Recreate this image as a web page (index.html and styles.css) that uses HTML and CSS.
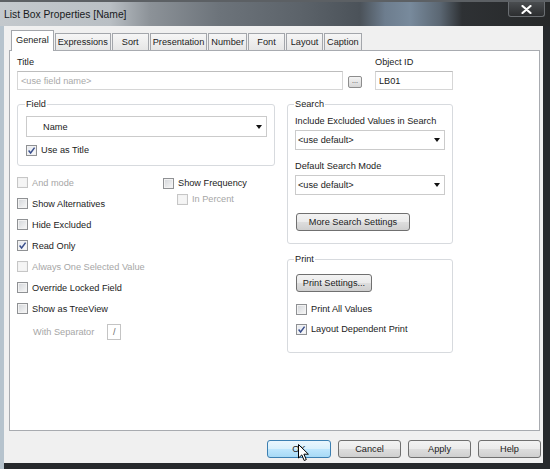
FILE: index.html
```html
<!DOCTYPE html>
<html>
<head>
<meta charset="utf-8">
<title>List Box Properties [Name]</title>
<link rel="stylesheet" href="styles.css">
</head>
<body>
<div class="window">
  <div class="titlebar">
    <span class="title">List Box Properties [Name]</span>
    <span class="close"><svg width="11" height="9" viewBox="0 0 11 9"><path d="M1.5 1 L9.5 8 M9.5 1 L1.5 8" stroke="#fff" stroke-width="2.2" stroke-linecap="round"/></svg></span>
  </div>
  <div class="dialog">
    <div class="tabs">
      <span class="tab active">General</span>
      <span class="tab">Expressions</span>
      <span class="tab">Sort</span>
      <span class="tab">Presentation</span>
      <span class="tab">Number</span>
      <span class="tab">Font</span>
      <span class="tab">Layout</span>
      <span class="tab">Caption</span>
    </div>
    <div class="panel">
      <div class="top-row">
        <div class="title-field">
          <div class="lbl">Title</div>
          <div class="title-input-row">
            <div class="input wide placeholder">&lt;use field name&gt;</div>
            <span class="dots">...</span>
          </div>
        </div>
        <div class="objid">
          <div class="lbl">Object ID</div>
          <div class="input id">LB01</div>
        </div>
      </div>
      <div class="columns">
        <div class="left-col">
          <fieldset class="group field-group">
            <legend>Field</legend>
            <div class="select name-select"><span>Name</span><i class="arrow"></i></div>
            <div class="check use-title"><span class="box on"><svg width="9" height="9" viewBox="0 0 9 9"><path d="M1.6 4.6 L3.6 7 L7.6 1.6" fill="none" stroke="#3a4f8c" stroke-width="1.5"/></svg></span>Use as Title</div>
          </fieldset>
          <div class="options">
            <div class="opt-col">
              <div class="check disabled"><span class="box"></span>And mode</div>
              <div class="check"><span class="box"></span>Show Alternatives</div>
              <div class="check"><span class="box"></span>Hide Excluded</div>
              <div class="check"><span class="box on"><svg width="9" height="9" viewBox="0 0 9 9"><path d="M1.6 4.6 L3.6 7 L7.6 1.6" fill="none" stroke="#3a4f8c" stroke-width="1.5"/></svg></span>Read Only</div>
              <div class="check disabled"><span class="box"></span>Always One Selected Value</div>
              <div class="check"><span class="box"></span>Override Locked Field</div>
              <div class="check"><span class="box"></span>Show as TreeView</div>
              <div class="sep-row"><span>With Separator</span><span class="sep-input">/</span></div>
            </div>
            <div class="opt-col2">
              <div class="check"><span class="box"></span>Show Frequency</div>
              <div class="check disabled indent"><span class="box"></span>In Percent</div>
            </div>
          </div>
        </div>
        <div class="right-col">
          <fieldset class="group search-group">
            <legend>Search</legend>
            <div class="lbl">Include Excluded Values in Search</div>
            <div class="select"><span>&lt;use default&gt;</span><i class="arrow"></i></div>
            <div class="lbl gap">Default Search Mode</div>
            <div class="select"><span>&lt;use default&gt;</span><i class="arrow"></i></div>
            <span class="btn more">More Search Settings</span>
          </fieldset>
          <fieldset class="group print-group">
            <legend>Print</legend>
            <span class="btn print-btn">Print Settings...</span>
            <div class="check print-first"><span class="box"></span>Print All Values</div>
            <div class="check"><span class="box on"><svg width="9" height="9" viewBox="0 0 9 9"><path d="M1.6 4.6 L3.6 7 L7.6 1.6" fill="none" stroke="#3a4f8c" stroke-width="1.5"/></svg></span>Layout Dependent Print</div>
          </fieldset>
        </div>
      </div>
    </div>
    <div class="buttons">
      <span class="btn dlg ok">OK<svg class="cursor" width="12" height="18" viewBox="0 0 12 18"><path d="M0.5 0.5 L0.5 14 L3.8 10.9 L6.2 16.5 L8.3 15.6 L5.9 10.2 L10.4 10.2 Z" fill="#fff" stroke="#000" stroke-width="1" stroke-linejoin="round"/></svg></span>
      <span class="btn dlg">Cancel</span>
      <span class="btn dlg">Apply</span>
      <span class="btn dlg">Help</span>
    </div>
  </div>
</div>
</body>
</html>
```

FILE: styles.css
```css
* { box-sizing: border-box; }
html, body { margin: 0; padding: 0; }
body {
  width: 550px;
  height: 469px;
  overflow: hidden;
  background: #1c1e20;
  font-family: "Liberation Sans", Arial, sans-serif;
  font-size: 9.2px;
  color: #1b1b1b;
}
.window {
  width: 550px;
  height: 469px;
  display: flex;
  flex-direction: column;
  background: linear-gradient(to right, #b6c3cd 0, #b6c3cd 4px, #26292c 4px, #26292c 100%);
}
.titlebar {
  height: 26px;
  flex: none;
  display: flex;
  align-items: flex-start;
  justify-content: space-between;
  padding: 0 5px 0 4px;
  border-top: 2px solid #5c6064;
  background: linear-gradient(to right, #c4c9cd 0, #b9bfc4 110px, #8c9298 150px, #6c737a 220px, #5c636a 300px, #4b5259 360px, #6d7d8e 385px, #788a9c 410px, #5b6773 440px, #2e3134 462px, #262829 550px);
}
.title {
  font-size: 10.3px;
  line-height: 12px;
  margin-top: 7px;
  color: #181a1c;
}
.close {
  width: 37px;
  height: 15px;
  display: flex;
  align-items: center;
  justify-content: center;
  background: linear-gradient(#4a4d50, #2c2e30);
  border: 1px solid #6a6e72;
  border-top: none;
  border-radius: 0 0 3px 3px;
}
.dialog {
  flex: 1;
  margin: 0 7px 6px 4px;
  background: #f0f0f0;
  display: flex;
  flex-direction: column;
  padding: 4px 3px 5px 5px;
}
.tabs {
  height: 20px;
  display: flex;
  align-items: flex-end;
  padding-left: 2px;
  gap: 1px;
}
.tab {
  height: 17px;
  min-width: 37px;
  padding: 0 2px;
  border: 1px solid #a3a6ab;
  border-bottom: none;
  background: linear-gradient(#f6f6f6, #e6e6e6);
  display: flex;
  align-items: center;
  justify-content: center;
  color: #222;
}
.tab.active {
  height: 21px;
  margin-bottom: -1px;
  padding: 0 4px 2px;
  background: #fff;
  position: relative;
  z-index: 1;
}
.panel {
  flex: 1;
  background: #fff;
  border: 1px solid #a8abb0;
  padding: 6px 7px 0 7px;
}
.lbl { line-height: 11px; }
.top-row { display: flex; gap: 13px; }
.title-field { width: 345px; }
.title-input-row {
  display: flex;
  align-items: flex-end;
  gap: 5px;
  margin-top: 3px;
}
.input {
  height: 19px;
  border: 1px solid #d6d6d6;
  border-top-color: #bdbdbd;
  background: #fff;
  display: flex;
  align-items: center;
  padding-left: 3px;
}
.input.wide { width: 326px; }
.placeholder { color: #a9a9a9; }
.dots {
  width: 14px;
  height: 12px;
  margin-bottom: 2px;
  border: 1px solid #8d8d8d;
  border-radius: 2px;
  background: linear-gradient(#f4f4f4, #d6d6d6);
  font-size: 7px;
  line-height: 8px;
  text-align: center;
  color: #333;
}
.objid { width: 78px; }
.objid .input { margin-top: 3px; }
.columns {
  display: flex;
  gap: 12px;
  margin-top: 9px;
}
.left-col { width: 258px; }
.right-col { width: 166px; }
fieldset.group {
  margin: 0;
  min-width: 0;
  border: 1px solid #d7dade;
  border-radius: 3px;
}
fieldset.group legend {
  padding: 0 1px;
  margin-left: -1px;
  line-height: 11px;
}
.field-group { padding: 6px 7px 5px 8px; }
.select {
  height: 20px;
  margin-top: 3px;
  border: 1px solid #cbcbcb;
  background: #fff;
  display: flex;
  align-items: center;
  justify-content: space-between;
  padding: 0 4px 0 2px;
}
.arrow {
  width: 0;
  height: 0;
  border-left: 3.5px solid transparent;
  border-right: 3.5px solid transparent;
  border-top: 4px solid #111;
}
.name-select {
  height: 21px;
  margin-top: 0;
  padding-left: 16px;
}
.check {
  display: flex;
  align-items: center;
  gap: 4px;
  height: 21px;
}
.box {
  width: 11px;
  height: 11px;
  flex: none;
  border: 1px solid #8f9194;
  background: linear-gradient(135deg, #d2d5d9, #f8f8f8);
  box-shadow: inset 0 0 0 1px #f2f2f2;
  display: flex;
  align-items: center;
  justify-content: center;
}
.box.on { background: linear-gradient(135deg, #e4e8ef, #fbfbfb); }
.check.disabled { color: #a6a6a6; }
.check.disabled .box {
  border-color: #c6c6c6;
  background: #f5f5f5;
}
.use-title { height: 20px; margin-top: 3px; }
.options { display: flex; margin-top: 6px; }
.opt-col { width: 146px; }
.opt-col2 { padding-top: 3px; }
.opt-col2 .check { height: 16px; }
.opt-col2 .indent { padding-left: 14px; }
.sep-row {
  display: flex;
  align-items: center;
  margin-top: 5px;
  padding-left: 16px;
  color: #a6a6a6;
}
.sep-input {
  margin-left: 13px;
  width: 14px;
  height: 16px;
  border: 1px solid #c4c4c4;
  display: flex;
  align-items: center;
  justify-content: center;
  color: #6a6a6a;
}
.search-group { padding: 6px 7px 12px 7px; }
.lbl.gap { margin-top: 11px; }
.btn {
  height: 18px;
  border: 1px solid #707070;
  border-radius: 3px;
  background: linear-gradient(#f3f3f3 0%, #ebebeb 48%, #dddddd 52%, #cfcfcf 100%);
  display: flex;
  align-items: center;
  justify-content: center;
  color: #1b1b1b;
}
.more { width: 114px; margin: 18px 0 0 1px; }
fieldset.print-group { margin-top: 10px; padding: 9px 7px 13px 7px; }
.print-btn { width: 76px; margin-left: 1px; }
.print-group .check { height: 20px; padding-left: 1px; }
.print-group .print-first { margin-top: 7px; }
.buttons {
  display: flex;
  justify-content: flex-end;
  gap: 7px;
  margin-top: 9px;
  margin-right: -1px;
}
.dlg { width: 63px; }
.ok {
  width: 64px;
  position: relative;
  border-color: #3c7fb1;
  background: linear-gradient(#eaf6fd 0%, #d9f0fc 48%, #bee6fd 52%, #a7d9f5 100%);
}
.cursor {
  position: absolute;
  left: 30px;
  top: 3px;
}
```
